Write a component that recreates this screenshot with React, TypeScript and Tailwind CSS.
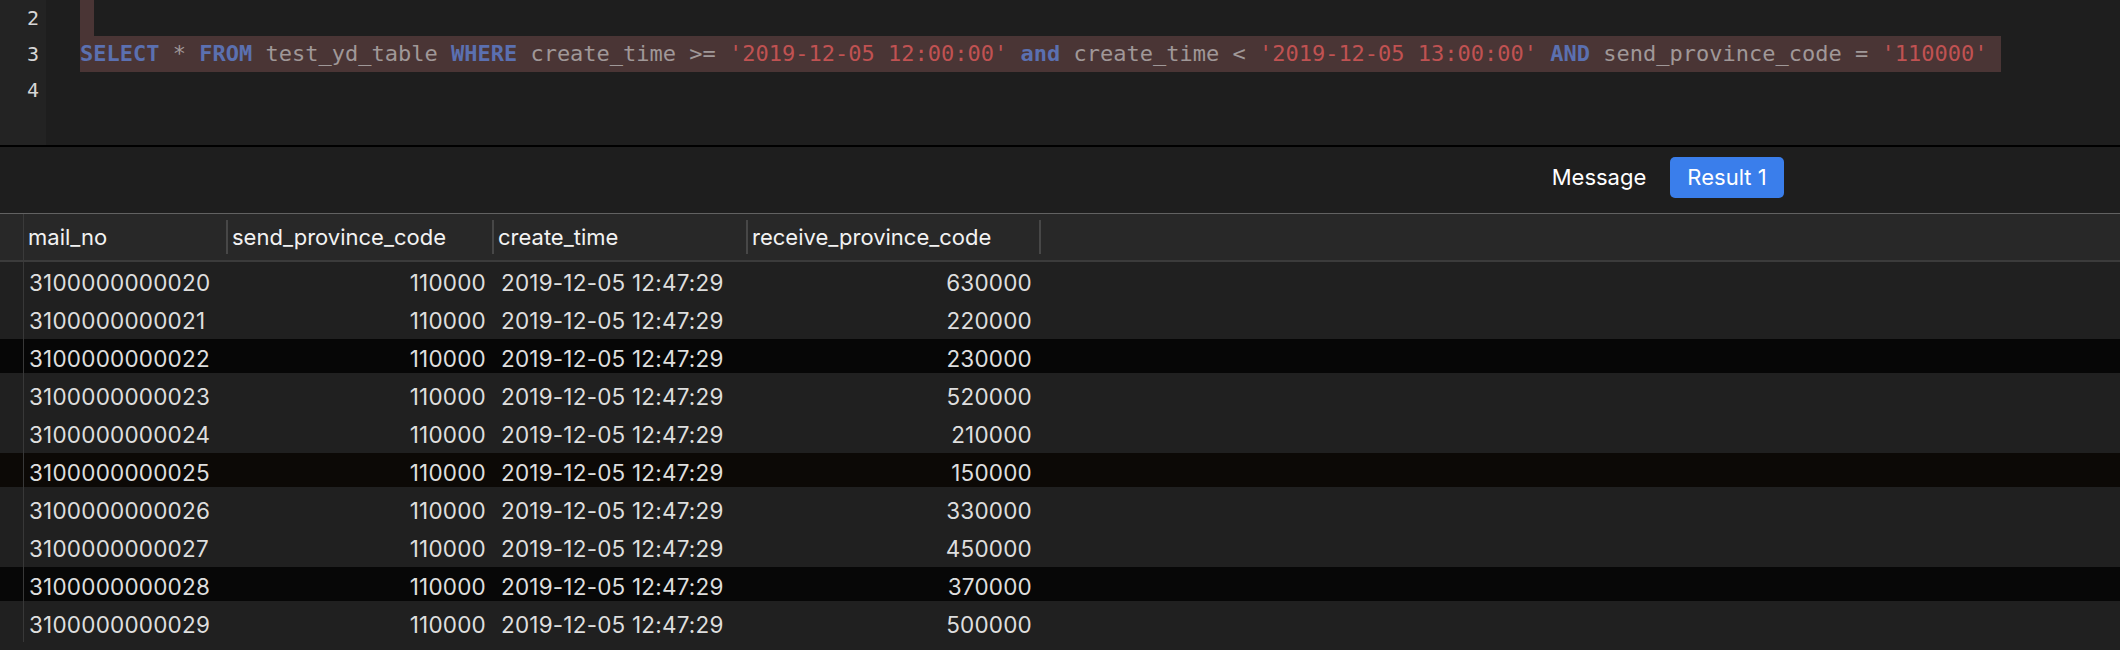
import clsx from "clsx"

const rows = [
  ["3100000000020", "630000"],
  ["3100000000021", "220000"],
  ["3100000000022", "230000"],
  ["3100000000023", "520000"],
  ["3100000000024", "210000"],
  ["3100000000025", "150000"],
  ["3100000000026", "330000"],
  ["3100000000027", "450000"],
  ["3100000000028", "370000"],
  ["3100000000029", "500000"],
]

// rows 3, 6 and 9 carry a darker stripe
const bandColor = (i: number) =>
  i === 2 ? "bg-[#060606]" : i === 5 ? "bg-[#0c0906]" : i === 8 ? "bg-[#070707]" : ""

const kw = "text-[#5b70b0] font-bold"
const id = "text-[#a09898]"
const str = "text-[#c05252]"

function Editor() {
  return (
    <div className="h-[145px] flex">
      <div className="w-[46px] bg-[#232323] pr-[7px] text-right text-[20px] leading-[36px] text-[#d6d6d6] font-['DejaVu_Sans_Mono',monospace]">
        <div>2</div>
        <div>3</div>
        <div>4</div>
      </div>
      <div className="flex-1 pl-[34px] text-[22px] leading-[36px] whitespace-pre font-['DejaVu_Sans_Mono',monospace]">
        <div className="h-[36px]">
          <span className="inline-block w-[14px] h-[36px] bg-[#4a3535] align-top" />
        </div>
        <div className="h-[36px]">
          <span className="inline-block h-[36px] bg-[#4a3535] align-top">
            <span className={kw}>SELECT</span>
            <span className={id}> * </span>
            <span className={kw}>FROM</span>
            <span className={id}> test_yd_table </span>
            <span className={kw}>WHERE</span>
            <span className={id}> create_time &gt;= </span>
            <span className={str}>'2019-12-05 12:00:00'</span>
            <span className={id}> </span>
            <span className={kw}>and</span>
            <span className={id}> create_time &lt; </span>
            <span className={str}>'2019-12-05 13:00:00'</span>
            <span className={id}> </span>
            <span className={kw}>AND</span>
            <span className={id}> send_province_code = </span>
            <span className={str}>'110000'</span>
            <span className={id}> </span>
          </span>
        </div>
        <div className="h-[36px]" />
      </div>
    </div>
  )
}

function Sep() {
  return <div className="w-[2px] h-[34px] bg-[#474747]" />
}

function Header() {
  return (
    <div className="h-[46px] flex items-center bg-[#282828] text-[22px] text-[#f2f2f2]">
      <div className="w-[23px] h-full" />
      <div className="w-px h-full bg-[#3a3a3a]" />
      <div className="w-[202px] pl-[4px]">mail_no</div>
      <Sep />
      <div className="w-[264px] pl-[4px]">send_province_code</div>
      <Sep />
      <div className="w-[252px] pl-[4px]">create_time</div>
      <Sep />
      <div className="w-[291px] pl-[4px]">receive_province_code</div>
      <Sep />
      <div className="flex-1" />
    </div>
  )
}

function Row({ mail, recv, index }: { mail: string; recv: string; index: number }) {
  const band = bandColor(index)
  return (
    <div className="h-[38px] flex text-[22.5px] tracking-[0.2px] text-[#dedede]">
      <div className="w-[23px] pt-px">
        <div className={clsx("h-[34px]", band)} />
      </div>
      <div className="w-px h-full bg-[#383838]" />
      <div className="flex-1 pt-px">
        <div className={clsx("h-[34px] pt-[5px] flex items-center", band)}>
          <div className="w-[202px] pl-[5px]">{mail}</div>
          <div className="w-[2px]" />
          <div className="w-[264px] pr-[6px] text-right">110000</div>
          <div className="w-[2px]" />
          <div className="w-[252px] pl-[7px]">2019-12-05 12:47:29</div>
          <div className="w-[2px]" />
          <div className="w-[291px] pr-[7px] text-right">{recv}</div>
        </div>
      </div>
    </div>
  )
}

export default function App() {
  return (
    <div className="w-[2120px] h-[650px] overflow-hidden flex flex-col bg-[#1e1e1e] font-['Inter','Liberation_Sans',sans-serif]">
      <Editor />
      <div className="h-[2px] bg-black" />
      <div className="h-[66px] flex justify-end items-start gap-[14px] pt-[10px] pr-[336px] text-[22px]">
        <button className="w-[114px] h-[41px] rounded-[5px] flex items-center justify-center text-white">
          Message
        </button>
        <button className="w-[114px] h-[41px] rounded-[5px] flex items-center justify-center bg-[#3a7eeb] text-white">
          Result 1
        </button>
      </div>
      <div className="h-px bg-[#626262]" />
      <Header />
      <div className="h-[2px] bg-[#3b3b3b]" />
      <div className="flex-1 bg-[#202020]">
        {rows.map(([mail, recv], i) => (
          <Row key={mail} mail={mail} recv={recv} index={i} />
        ))}
      </div>
    </div>
  )
}
